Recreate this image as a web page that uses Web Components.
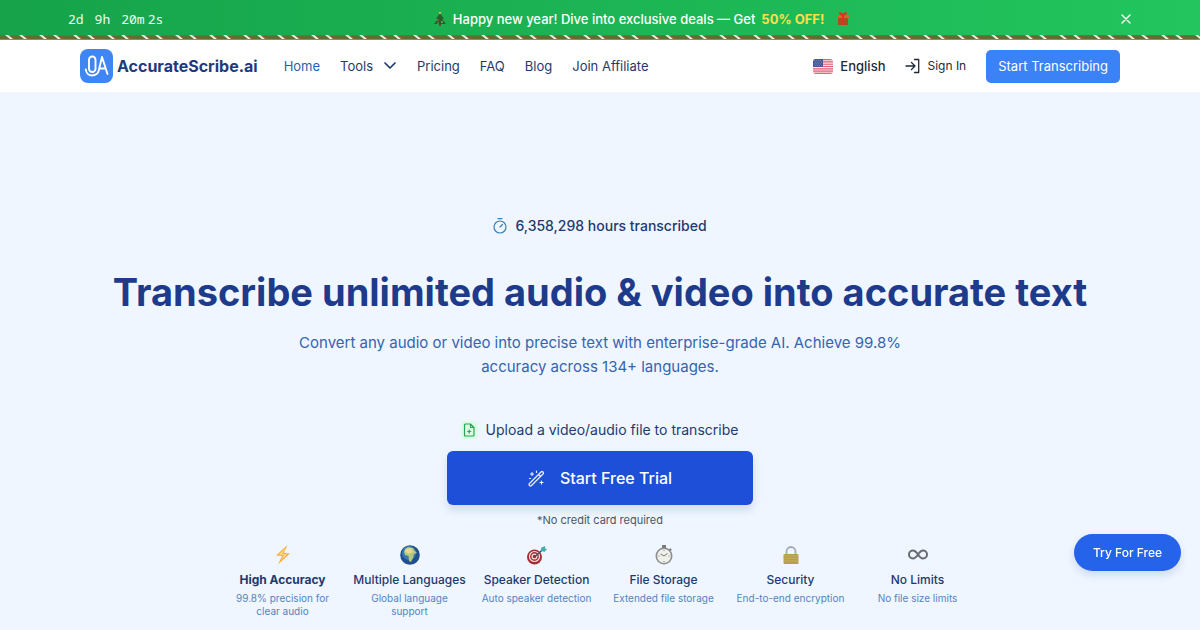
<!DOCTYPE html>
<html lang="en">
<head>
<meta charset="utf-8">
<title>AccurateScribe.ai</title>
<style>
body{margin:0;background:#eff6ff;color:#1e3a8a;font-family:Inter,"Liberation Sans",sans-serif;min-height:100vh}
</style>
</head>
<body>
<as-page></as-page>
<script>
const define = (name, html) => customElements.define(name, class extends HTMLElement {
  constructor() {
    super();
    const t = document.createElement('template');
    t.innerHTML = html;
    this.attachShadow({ mode: 'open' }).append(t.content.cloneNode(true));
  }
});

define('as-icon-garland', `
<style>:host{display:block;height:5px}svg{display:block;width:100%;height:5px}</style>
<svg aria-hidden="true"><defs><pattern id="g" width="34" height="5" patternUnits="userSpaceOnUse">
<rect width="34" height="5" fill="#22a94f"/><rect y="1" width="34" height="4" fill="#8a5e35"/><rect y="4" width="34" height="1" fill="#b9794c"/>
<path d="M-6 0H7L12 4H-2zM10 0H22L27 4H16zM25 0h12l4 4H31z" fill="#3f7a30" opacity=".6"/>
<path d="M5 0h3l5 4h-3zM19 0h3l5 4h-3z" fill="#e6fbe9"/></pattern></defs><rect width="100%" height="5" fill="url(#g)"/></svg>`);

define('as-banner', `
<style>
:host{display:block;background:linear-gradient(90deg,#16a34a,#22c55e);color:#fff}
.row{display:flex;justify-content:space-between;align-items:center;height:35px;padding:3px 68px 0;box-sizing:border-box}
.time{font:13px/20px "Noto Sans Mono","DejaVu Sans Mono",monospace;display:flex;gap:11px;color:#eafff0}
.pair{display:flex;gap:3px}
.msg{font-size:13px;line-height:20px;font-weight:500;display:flex;align-items:center;gap:6px}
b{color:#fde047;font-weight:700;padding-right:6px}
svg{display:block}
button{background:none;border:0;padding:0;color:#fff}
</style>
<div class="row">
<div class="time"><span>2d</span><span>9h</span><div class="pair"><span>20m</span><span>2s</span></div></div>
<div class="msg">
<svg width="14" height="16" viewBox="0 0 14 16" aria-hidden="true"><path d="M7 2L3 8h2l-4 5h12L9 8h2z" fill="#23612a"/><path d="M6 13h2v2H6z" fill="#6b4423"/><circle cx="7" cy="2" r="1" fill="#f7c948"/><circle cx="5" cy="9" r=".8" fill="#e85a3b"/><circle cx="9" cy="11" r=".8" fill="#f3ce4a"/><circle cx="5" cy="12" r=".7" fill="#67b7e8"/></svg>
<span>Happy new year! Dive into exclusive deals — Get</span><b>50% OFF!</b>
<svg width="14" height="14" viewBox="0 0 14 14" aria-hidden="true"><path d="M2 5h10v8H2z" fill="#a8501d"/><path d="M1 3h12v3H1z" fill="#cf6a2a"/><path d="M6 3h2v10H6z" fill="#e42f25"/><path d="M7 3C4 3 3 1 4 1s3 1 3 2c0-1 2-2 3-2s0 2-3 2" fill="none" stroke="#e42f25" stroke-width="1.3"/></svg>
</div>
<button aria-label="Close"><svg width="12" height="12" viewBox="0 0 12 12"><path d="M2 2l8 8M10 2L2 10" stroke="#fff" stroke-width="1.4" stroke-linecap="round"/></svg></button>
</div>
<as-icon-garland></as-icon-garland>`);

define('as-logo', `
<style>:host{display:block}a{display:flex;align-items:center;gap:4px;font-size:16px;line-height:24px;font-weight:700;color:#1e3a7a;text-decoration:none}svg{display:block}</style>
<a href="#"><svg width="33" height="34" viewBox="0 0 33 34" aria-hidden="true"><rect width="33" height="34" rx="8" fill="#3f86f2"/><g fill="none" stroke="#fff" stroke-width="1.9" stroke-linecap="round" stroke-linejoin="round"><rect x="9" y="7.500" width="6.500" height="15.500" rx="3.200"/><path d="M5.800 20.500c.7 8 12 8 13.200 0L22 8l5.500 17M19.500 19.500h6"/></g></svg><span><slot></slot></span></a>`);

define('as-link', `
<style>:host{display:block}a{display:flex;align-items:center;gap:var(--gap,10px);color:inherit;text-decoration:none}</style>
<a href="#"><slot></slot></a>`);

define('as-header', `
<style>
:host{display:flex;align-items:center;height:52px;padding:0 80px;background:#fff;font-size:13px;line-height:20px;color:#1e3a6e}
nav{display:flex;align-items:center;gap:20px;margin-left:26px}
.right{display:flex;align-items:center;gap:20px;margin-left:auto;color:#1f2937;--gap:7px}
.home{color:#2563b0}
.lang{font-weight:500}.sign{font-size:12px}
button{font:400 13px/20px Inter,sans-serif;color:#fff;background:#3b82f6;border:0;border-radius:5px;height:33px;padding:0 12px}
svg{display:block}
</style>
<as-logo>AccurateScribe.ai</as-logo>
<nav><as-link class="home">Home</as-link><as-link>Tools <svg width="14" height="10" viewBox="0 0 14 10" aria-hidden="true"><path d="M2 2l5 5 5-5" fill="none" stroke="#1e3a6e" stroke-width="1.7" stroke-linecap="round" stroke-linejoin="round"/></svg></as-link><as-link>Pricing</as-link><as-link>FAQ</as-link><as-link>Blog</as-link><as-link>Join Affiliate</as-link></nav>
<div class="right">
<as-link class="lang"><svg width="20" height="15" viewBox="0 0 20 15" aria-hidden="true"><defs><clipPath id="c"><rect width="20" height="15" rx="3"/></clipPath></defs><g clip-path="url(#c)"><path fill="#f6dfe5" d="M0 0h20v15H0z"/><path stroke="#e8607a" stroke-width="1.150" d="M0 .6h20M0 2.900h20M0 5.200h20M0 7.500h20M0 9.800h20M0 12.100h20M0 14.400h20"/><path fill="#4656a0" d="M0 0h10v8H0z"/><path stroke="#98a2d0" stroke-width=".7" stroke-dasharray=".8 1.200" d="M1 1.500h8M2 3.200h8M1 4.900h8M2 6.600h8"/></g></svg>English</as-link>
<as-link class="sign"><svg width="15" height="16" viewBox="0 0 15 16" aria-hidden="true"><path d="M1 8h9M6.500 4.500L10 8l-3.500 3.500M9.500 1.500h4.200v13H9.500" fill="none" stroke="#1f2937" stroke-width="1.300" stroke-linecap="round" stroke-linejoin="round"/></svg>Sign In</as-link>
<button>Start Transcribing</button></div>`);

define('as-feature', `
<style>
:host{display:flex;flex-direction:column;align-items:center;text-align:center}
h3{margin:7px 0 4px;font-size:12px;line-height:16px;font-weight:500;color:#1e3a6e;white-space:nowrap}
:host([strong]) h3{font-weight:700}
p{margin:0;font-size:10px;line-height:13px;color:#5583c0}
.i{display:flex;align-items:center;height:20px}
</style>
<div class="i"><slot name="icon"></slot></div><h3><slot name="title"></slot></h3><p><slot></slot></p>`);

define('as-hero', `
<style>
:host{display:flex;flex-direction:column;align-items:center;padding:122px 60px 12px;text-align:center}
svg{display:block}
.count{display:flex;align-items:center;gap:8px;font-size:14px;line-height:24px;font-weight:500;color:#1e3a6e}
h1{margin:30px 0 0;font-size:38px;line-height:48px;font-weight:700;color:#1e3a8a}
.lead{margin:15px 0 0;max-width:620px;font-size:15px;line-height:24px;color:#3564b0}
.upload{display:flex;align-items:center;gap:10px;margin-top:39px;font-size:14px;line-height:24px;color:#1e3a6e}
.cta{display:flex;align-items:center;justify-content:center;gap:15px;width:306px;height:54px;margin-top:9px;border:0;border-radius:6px;background:#1d4fd8;color:#fff;font:500 16px/24px Inter,sans-serif;box-shadow:0 5px 10px #1e3a8a26}
.note{margin:7px 0 0;font-size:11px;line-height:16px;color:#4b5563}
.features{display:grid;grid-template-columns:repeat(6,110px);gap:17px;margin-top:17px}
</style>
<div class="count"><svg width="14" height="16" viewBox="0 0 14 16" aria-hidden="true"><g fill="none" stroke="#397fb5" stroke-width="1.200" stroke-linecap="round"><circle cx="7" cy="9" r="6"/><path d="M5 .7h4M7 9l2.500-2.500"/></g></svg><span>6,358,298 hours transcribed</span></div>
<h1>Transcribe unlimited audio &amp; video into accurate text</h1>
<p class="lead">Convert any audio or video into precise text with enterprise-grade AI. Achieve 99.8% accuracy across 134+ languages.</p>
<div class="upload"><svg width="14" height="14" viewBox="0 0 14 14" style="overflow:visible" aria-hidden="true"><rect x="-1" y="-2" width="17" height="18" rx="4" fill="#dcfce7"/><path d="M3.500 1h5L12 4.500V12q0 1-1 1H3.500q-1 0-1-1V2q0-1 1-1zM8.500 1v3.500H12M7.200 6.500v4M5.200 8.500h4" fill="none" stroke="#27a550" stroke-width="1.200" stroke-linejoin="round"/></svg><span>Upload a video/audio file to transcribe</span></div>
<button class="cta"><svg width="17" height="17" viewBox="0 0 17 17" aria-hidden="true"><g fill="none" stroke="#e8f0ff" stroke-width="1.200" stroke-linecap="round" stroke-linejoin="round"><path d="M1.500 13.500L13 2q1-1 2 0t0 2L3.500 15.500q-1 1-2 0t0-2zM10.500 4.500l2 2M4 2.500v3M2.500 4h3M8.500 1v1.500M13.500 11v3M12 12.500h3M1.500 8.500h1"/></g></svg><span>Start Free Trial</span></button>
<p class="note">*No credit card required</p>
<div class="features">
<as-feature strong><svg slot="icon" width="20" height="20" viewBox="0 0 20 20"><path d="M14.500 0L3 10.500l6 .5-4 8.500L17 8.500l-6-.5z" fill="#f3b23f"/><path d="M13 3L6 9.500l5 .5-3 5 6-5.500-5-.5z" fill="#ffe08a"/></svg><span slot="title">High Accuracy</span>99.8% precision for clear audio</as-feature>
<as-feature><svg slot="icon" width="20" height="20" viewBox="0 0 20 20"><circle cx="10" cy="10" r="9.800" fill="#1f4f8f"/><circle cx="9" cy="8" r="7" fill="#347ab5"/><path d="M5 4l3-2 5 1 2 3 2 2-3 1-1 4-2 4-2-1-.5-5L5 10 4 7z" fill="#b5c77b"/><path d="M6 4l5-1 2 4-4 2-4-2z" fill="#e1d995"/></svg><span slot="title">Multiple Languages</span>Global language support</as-feature>
<as-feature><svg slot="icon" width="20" height="20" viewBox="0 0 20 20"><circle cx="7.500" cy="12" r="7.500" fill="#a92b33"/><g fill="none" stroke="#f4dede" stroke-width="1.200"><circle cx="7.500" cy="11.500" r="5"/><circle cx="7.500" cy="11.500" r="2.400"/></g><path d="M8 11.500L16 4.500" stroke="#354b58" stroke-width="1.200"/><path d="M13.500 5.500l1-3L18 1v2.500l2 .5-2.500 3z" fill="#4baab0"/></svg><span slot="title">Speaker Detection</span>Auto speaker detection</as-feature>
<as-feature><svg slot="icon" width="20" height="20" viewBox="0 0 20 20"><path d="M8 0h4v3H8zM16 3l2 2-2 1-1-1z" fill="#777a7d"/><circle cx="10" cy="11" r="7.700" fill="#f1f1ec" stroke="#8b8d8f" stroke-width="1.600"/><path d="M10 11l3.500-2.500M10 11L6.500 9M10 5v1M10 16v1M4.500 11h1M14.500 11h1" stroke="#777" stroke-width="1"/></svg><span slot="title">File Storage</span>Extended file storage</as-feature>
<as-feature><svg slot="icon" width="20" height="20" viewBox="0 0 20 20"><path d="M5.500 10V6.500a4.500 4.500 0 019 0V10" fill="none" stroke="#a3abb4" stroke-width="1.800"/><rect x="2.500" y="9" width="15" height="10" rx="1" fill="#b7a04d"/><path d="M3 11h14M3 13.500h14M3 16h14" stroke="#c6b260" stroke-width=".8"/></svg><span slot="title">Security</span>End-to-end encryption</as-feature>
<as-feature><svg slot="icon" width="20" height="20" viewBox="0 0 20 20"><path d="M10 9.500C8 6.500 7 5.500 5 5.500a4 4 0 000 8c2 0 3-1 5-4s3-4 5-4a4 4 0 010 8c-2 0-3-1-5-4z" fill="none" stroke="#686b70" stroke-width="2"/></svg><span slot="title">No Limits</span>No file size limits</as-feature>
</div>`);

define('as-float', `
<style>:host{display:block;position:fixed;right:19px;bottom:59px}button{display:block;font:500 12px/20px Inter,sans-serif;color:#fff;background:#2563eb;border:0;border-radius:20px;height:37px;padding:0 19px;box-shadow:0 4px 8px #1e3a8a26}</style>
<button><slot></slot></button>`);

define('as-page', `<style>:host{display:block}</style>
<as-banner></as-banner><as-header></as-header><main><as-hero></as-hero></main><as-float>Try For Free</as-float>`);
</script>
</body>
</html>
